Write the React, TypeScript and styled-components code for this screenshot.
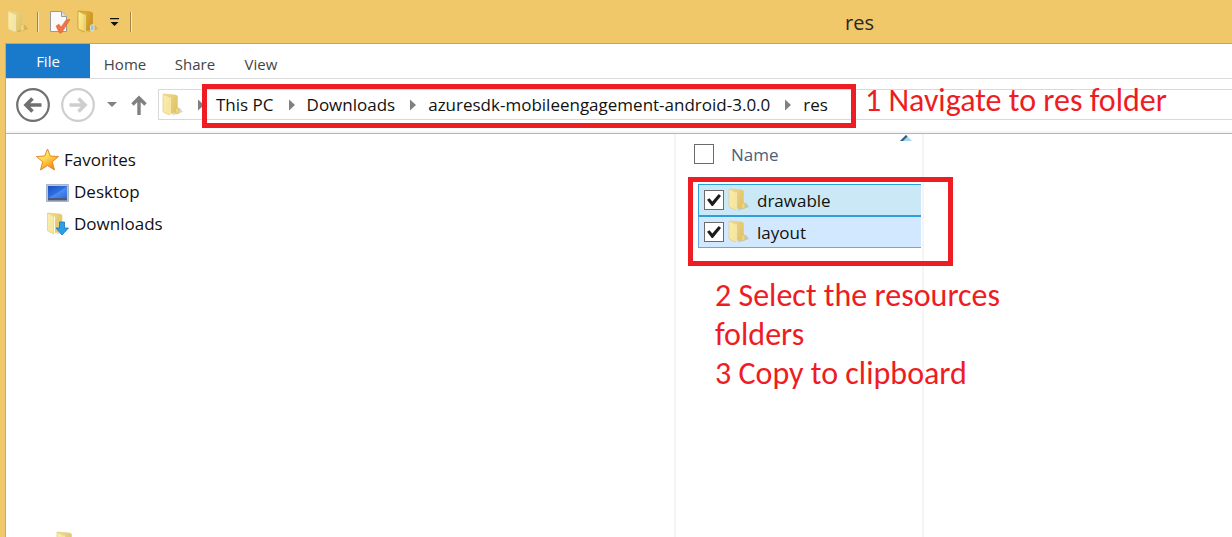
import React from "react";
import styled, { createGlobalStyle } from "styled-components";

const GlobalStyle = createGlobalStyle`
  *, *::before, *::after { box-sizing: border-box; }
  body { margin: 0; background: #fff; }
  button, a, input { font: inherit; color: inherit; }
`;

const RED = "#ee1c23";

const Window = styled.div`
  display: flex;
  flex-direction: column;
  height: 100vh;
  overflow: hidden;
  background: #f0c869;
  color: #111;
  font: 17px/24px "Open Sans", "Noto Sans", sans-serif;
`;

const TitleBar = styled.header`
  display: flex;
  align-items: center;
  flex: none;
  height: 43px;
  padding-left: 6px;
`;

const QuickButton = styled.button<{ $width?: number }>`
  display: flex;
  align-items: center;
  justify-content: center;
  width: ${(p) => p.$width ?? 28}px;
  height: 28px;
  padding: 0;
  border: 0;
  background: none;
`;

const Separator = styled.span`
  width: 2px;
  height: 20px;
  background: #a58443;
  border-right: 1px solid #fbe9bd;
`;

const Title = styled.h1`
  flex: 1;
  margin: 0;
  padding: 2px 0 0 709px;
  font-size: 20px;
  line-height: 24px;
  font-weight: 400;
  color: #2b2620;
`;

const Client = styled.div`
  display: flex;
  flex-direction: column;
  flex: 1;
  min-height: 0;
  margin-left: 5px;
  border-left: 1px solid #c9ab62;
  border-top: 1px solid #c9a44c;
  background: #fff;
`;

const Ribbon = styled.nav`
  display: flex;
  flex: none;
  height: 35px;
  border-bottom: 1px solid #dadbdc;
  font-size: 15px;
  color: #444;
`;

const FileTab = styled.button`
  width: 84px;
  padding: 0;
  border: 0;
  background: #1979ca;
  color: #fff;
`;

const Tab = styled.button<{ $width: number }>`
  width: ${(p) => p.$width}px;
  padding: 6px 0 0;
  border: 0;
  background: none;
`;

const AddressRow = styled.div`
  display: flex;
  align-items: center;
  flex: none;
  height: 55px;
  padding: 0 0 3px 9px;
  border-bottom: 1px solid #b5b5b5;
  box-shadow: inset 0 -2px #f6f6f6;
`;

const NavButton = styled.button<{ $width: number }>`
  display: flex;
  align-items: center;
  justify-content: center;
  width: ${(p) => p.$width}px;
  height: 36px;
  padding: 0;
  border: 0;
  background: none;
`;

const AddressBox = styled.div`
  position: relative;
  display: flex;
  align-items: center;
  flex: 1;
  height: 31px;
  padding-left: 2px;
  border: 1px solid #d9d9d9;
  border-right: 0;
`;

const Crumbs = styled.ol`
  display: flex;
  align-items: center;
  margin: 0;
  padding: 0 0 0 13px;
  list-style: none;
`;

const Crumb = styled.li`
  display: flex;
  align-items: center;
  gap: 12px;
  margin-right: 15px;
`;

const CrumbLink = styled.a`
  text-decoration: none;
  white-space: nowrap;
`;

const Panes = styled.div`
  display: flex;
  flex: 1;
  min-height: 0;
`;

const NavPane = styled.nav`
  flex: 0 0 670px;
  padding: 10px 0 0 30px;
  border-right: 2px solid #f5f5f5;
  overflow: hidden;
`;

const Tree = styled.ul`
  margin: 0 0 287px;
  padding: 0;
  list-style: none;
`;

const TreeItem = styled.li<{ $level?: number }>`
  padding-left: ${(p) => (p.$level ?? 0) * 10}px;
`;

const TreeLink = styled.a`
  display: flex;
  align-items: center;
  gap: 5px;
  height: 32px;
  text-decoration: none;
`;

const FilePane = styled.main`
  position: relative;
  flex: 1;
  display: flex;
`;

const NameColumn = styled.section`
  width: 248px;
  border-right: 2px solid #f5f5f5;
`;

const ColumnHeader = styled.div`
  position: relative;
  display: flex;
  align-items: center;
  gap: 17px;
  height: 40px;
  margin-bottom: 10px;
  padding-left: 18px;
  color: #4c607a;
`;

const ColumnName = styled.span`
  padding-top: 2px;
`;

const SortMark = styled.svg`
  position: absolute;
  top: 0;
  right: 10px;
`;

const Check = styled.input`
  appearance: none;
  display: grid;
  place-content: center;
  width: 20px;
  height: 20px;
  margin: 0;
  border: 1px solid #6b6b6b;
  background: #fff;
  &:checked::before {
    content: "";
    width: 14px;
    height: 13px;
    background: #1c1c1c;
    clip-path: polygon(0 48%, 18% 36%, 38% 62%, 84% 4%, 100% 20%, 42% 96%, 34% 96%);
  }
`;

const Files = styled.ul`
  margin: 0 1px 0 22px;
  padding: 0;
  list-style: none;
`;

const FileRow = styled.li<{ $focused?: boolean }>`
  display: flex;
  align-items: center;
  height: 32px;
  padding-left: 5px;
  border: 1px solid ${(p) => (p.$focused ? "#2f9fdc" : "#66a7e8")};
  border-top-color: #2f9fdc;
  border-right: 0;
  background: ${(p) => (p.$focused ? "#cbe8f6" : "#d1e8ff")};
`;

const FileLabel = styled.label`
  display: flex;
  align-items: center;
  gap: 7px;
  padding-left: 4px;
`;

const FileName = styled.span`
  padding-top: 2px;
`;

const Highlight = styled.div<{ $x: number; $y: number; $w: number; $h: number }>`
  position: absolute;
  left: ${(p) => p.$x}px;
  top: ${(p) => p.$y}px;
  width: ${(p) => p.$w}px;
  height: ${(p) => p.$h}px;
  border: 5px solid ${RED};
  pointer-events: none;
`;

const Note = styled.p<{ $x: number; $y: number; $w: number }>`
  position: absolute;
  left: ${(p) => p.$x}px;
  top: ${(p) => p.$y}px;
  width: ${(p) => p.$w}px;
  margin: 0;
  color: ${RED};
  font: 32px/39px Carlito, Lato, sans-serif;
`;

function Folder({ kind = "plain", width = 22 }: { kind?: "plain" | "bright" | "download"; width?: number }) {
  const id = React.useId();
  const bright = kind === "bright";
  const edge = bright ? "#c48f14" : "#e3cb80";
  return (
    <svg width={width} height="24" viewBox="0 0 22 24" aria-hidden="true">
      <defs>
        <linearGradient id={id + "f"} x1="0" x2="1" y2=".6">
          <stop offset="0" stopColor={bright ? "#fff2a6" : "#faedb0"} />
          <stop offset="1" stopColor={bright ? "#f3d765" : "#f7e59a"} />
        </linearGradient>
        <linearGradient id={id + "b"} x1="0" x2="1" y2=".5">
          <stop offset="0" stopColor={bright ? "#e9c049" : "#f2dd92"} />
          <stop offset="1" stopColor={bright ? "#c9951c" : "#e2c469"} />
        </linearGradient>
      </defs>
      <path d="M10 22.500l11-3.500-3-4-6 3z" fill="#70633c" opacity=".25" />
      <path d="M2 1l11.500 1 2 1v15.500L8 21z" fill={`url(#${id}b)`} stroke={edge} strokeWidth=".6" />
      <path d="M1 1l5.500 2.500c.7.300 1 .8 1 1.500v17L2 19.500c-.7-.3-1-.7-1-1.500z" fill={`url(#${id}f)`} stroke={edge} strokeWidth=".7" />
      <path d="M8 4.500V21.500" stroke="#fffbe0" strokeWidth="1" />
      <path d="M13.500 15.500c.8-1.200 3.500-1 3.500.3v4c-.8 1.400-3.500 1.400-3.500 0z" fill={bright ? "#8fc6ea" : "#ecd57c"} stroke={bright ? "#fff" : "#d9be63"} strokeWidth=".6" />
      {kind === "download" && (
        <path d="M13 10h5v6h4L15.500 23 9.500 16H13z" fill="#2ba0e6" stroke="#1576bb" strokeWidth=".8" />
      )}
    </svg>
  );
}

const Star = () => (
  <svg width="23" height="24" viewBox="0 0 23 24" aria-hidden="true">
    <defs>
      <linearGradient id="star" x1="0" x2=".7" y2="1">
        <stop offset="0" stopColor="#fff8b0" />
        <stop offset=".5" stopColor="#ffd84c" />
        <stop offset="1" stopColor="#f57f1c" />
      </linearGradient>
    </defs>
    <path d="M11.500 1l2.800 7 8.200.5-6.200 5.300 2.200 8.200-7-4.500L4.500 22l2.200-8.200L.5 8.500 8.700 8z" fill="url(#star)" stroke="#e58a20" strokeLinejoin="round" />
  </svg>
);

const Desktop = () => (
  <svg width="23" height="24" viewBox="0 0 23 24" aria-hidden="true">
    <defs>
      <linearGradient id="screen" x1="0" x2="1" y2="1">
        <stop offset="0" stopColor="#1c50bd" />
        <stop offset=".5" stopColor="#2f6fe0" />
        <stop offset=".55" stopColor="#4c8bee" />
        <stop offset="1" stopColor="#2e6ce0" />
      </linearGradient>
    </defs>
    <path d="M.5 4.500h22v17H.5z" fill="#b9c6da" stroke="#a9b5c9" />
    <path d="M2 6h19v12H2z" fill="url(#screen)" />
    <path d="M2 18h19v2.500H2z" fill="#4a5a78" />
  </svg>
);

const Properties = () => (
  <svg width="22" height="24" viewBox="0 0 22 24" aria-hidden="true">
    <path d="M1.500 1.500h11l5 5v15h-16z" fill="#fafafa" stroke="#9a9a9a" />
    <path d="M12.500 1.500v5h5" fill="#dfe3e6" stroke="#9a9a9a" />
    <path d="M7 16l3-1.800 2 3 5-7.200 4-.5-8.500 13.500h-2z" fill="#ee7443" stroke="#df6433" strokeWidth=".6" />
  </svg>
);

const Arrow = ({ color, flip }: { color: string; flip?: boolean }) => (
  <svg width="36" height="36" viewBox="0 0 36 36" fill="none" stroke={color} aria-hidden="true">
    <circle cx="18" cy="18" r="15.800" strokeWidth="2.200" />
    <path
      d={flip ? "M9.500 18h15M18.500 11.500l6.500 6.500-6.500 6.500" : "M26.500 18h-15M17.500 11.500L11 18l6.500 6.500"}
      strokeWidth="3.600"
    />
  </svg>
);

const Chevron = () => (
  <svg width="6" height="12" viewBox="0 0 6 12" aria-hidden="true">
    <path d="M0 .5L6 6l-6 5.500z" fill="#808080" />
  </svg>
);

const crumbs = ["This PC", "Downloads", "azuresdk-mobileengagement-android-3.0.0", "res"];
const files = ["drawable", "layout"];

export default function App() {
  return (
    <Window>
      <GlobalStyle />
      <TitleBar>
        <QuickButton aria-label="Folder menu" $width={24}><Folder /></QuickButton>
        <QuickButton as="span" $width={16}><Separator /></QuickButton>
        <QuickButton aria-label="Properties"><Properties /></QuickButton>
        <QuickButton aria-label="New folder"><Folder kind="bright" /></QuickButton>
        <QuickButton aria-label="Customize toolbar" $width={24}>
          <svg width="9" height="8" viewBox="0 0 9 8" aria-hidden="true">
            <path d="M0 0h9v1.200H0zM.5 4h8l-4 4z" fill="#111" />
          </svg>
        </QuickButton>
        <QuickButton as="span" $width={10}><Separator /></QuickButton>
        <Title>res</Title>
      </TitleBar>
      <Client>
        <Ribbon aria-label="Ribbon">
          <FileTab>File</FileTab>
          <Tab $width={70}>Home</Tab>
          <Tab $width={70}>Share</Tab>
          <Tab $width={62}>View</Tab>
        </Ribbon>
        <AddressRow>
          <NavButton aria-label="Back" $width={36}><Arrow color="#707070" /></NavButton>
          <NavButton aria-label="Forward" $width={54}><Arrow color="#cecece" flip /></NavButton>
          <NavButton aria-label="Recent locations" $width={14}>
            <svg width="10" height="5" viewBox="0 0 10 5" aria-hidden="true"><path d="M0 0h10L5 5z" fill="#808080" /></svg>
          </NavButton>
          <NavButton aria-label="Up" $width={39}>
            <svg width="16" height="20" viewBox="0 0 16 20" fill="none" stroke="#808080" aria-hidden="true">
              <path d="M8 20V3M1.500 9.500L8 3l6.500 6.500" strokeWidth="3.400" />
            </svg>
          </NavButton>
          <AddressBox>
            <Folder width={24} />
            <Crumbs>
              {crumbs.map((name) => (
                <Crumb key={name}>
                  <Chevron />
                  <CrumbLink href="#">{name}</CrumbLink>
                </Crumb>
              ))}
            </Crumbs>
            <Highlight $x={43} $y={-6} $w={654} $h={44} />
            <Note $x={706} $y={-9} $w={340}>1 Navigate to res folder</Note>
          </AddressBox>
        </AddressRow>
        <Panes>
          <NavPane aria-label="Folders">
            <Tree>
              <TreeItem><TreeLink href="#"><Star />Favorites</TreeLink></TreeItem>
              <TreeItem $level={1}><TreeLink href="#"><Desktop />Desktop</TreeLink></TreeItem>
              <TreeItem $level={1}><TreeLink href="#"><Folder kind="download" width={23} />Downloads</TreeLink></TreeItem>
            </Tree>
            <Tree>
              <TreeItem $level={2}><TreeLink href="#" aria-label="Folder"><Folder /></TreeLink></TreeItem>
            </Tree>
          </NavPane>
          <FilePane>
            <NameColumn>
              <ColumnHeader>
                <Check type="checkbox" aria-label="Select all" />
                <ColumnName>Name</ColumnName>
                <SortMark width="12" height="7" viewBox="0 0 12 7" aria-hidden="true">
                  <path d="M0 7l6-6 6 6z" fill="#a9d5ee" />
                  <path d="M0 7l6-6 1.500 1.500L3 7z" fill="#2f5f86" />
                </SortMark>
              </ColumnHeader>
              <Files>
                {files.map((name, i) => (
                  <FileRow key={name} $focused={i === 0}>
                    <Check type="checkbox" id={name} defaultChecked />
                    <FileLabel htmlFor={name}><Folder /><FileName>{name}</FileName></FileLabel>
                  </FileRow>
                ))}
              </Files>
            </NameColumn>
            <Highlight $x={12} $y={43} $w={265} $h={89} />
            <Note $x={39} $y={142} $w={310}>
              2 Select the resources folders<br />3 Copy to clipboard
            </Note>
          </FilePane>
        </Panes>
      </Client>
    </Window>
  );
}
